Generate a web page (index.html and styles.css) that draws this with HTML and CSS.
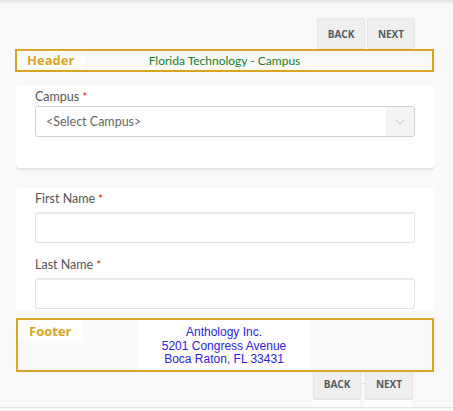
FILE: index.html
```html
<!DOCTYPE html>
<html>
<head>
<meta charset="utf-8">
<link rel="stylesheet" href="styles.css">
</head>
<body>
<div class="topbar"></div>
<div class="nav nav-top">
  <button class="btn">BACK</button>
  <button class="btn">NEXT</button>
</div>
<div class="region header">
  <span class="region-label">Header</span>
  <span class="header-title">Florida Technology - Campus</span>
</div>
<div class="card card-campus">
  <label class="field-label">Campus <span class="req">*</span></label>
  <div class="select">
    <span class="select-text">&lt;Select Campus&gt;</span>
    <span class="select-arrow">
      <svg width="10" height="6" viewBox="0 0 10 6"><path d="M1 1 L5 5 L9 1" fill="none" stroke="#d8d8d8" stroke-width="1.3"/></svg>
    </span>
  </div>
</div>
<div class="card card-name">
  <label class="field-label">First Name <span class="req">*</span></label>
  <div class="input"></div>
  <label class="field-label label-gap">Last Name <span class="req">*</span></label>
  <div class="input"></div>
</div>
<div class="region footer">
  <span class="region-label">Footer</span>
  <div class="address">
    <div>Anthology Inc.</div>
    <div>5201 Congress Avenue</div>
    <div>Boca Raton, FL 33431</div>
  </div>
</div>
<div class="nav nav-bottom">
  <button class="btn">BACK</button>
  <span class="btn-link"></span>
  <button class="btn">NEXT</button>
</div>
<div class="nav nav-ghost">
  <span class="ghost"></span>
  <span class="ghost"></span>
</div>
</body>
</html>
```
FILE: styles.css
```css
html, body {
  margin: 0;
  padding: 0;
  background: #f9f9f9;
  height: 411px;
  overflow: hidden;
  font-family: Lato, "Open Sans", sans-serif;
}
body {
  border-bottom: 1px solid #e6e6e6;
  box-sizing: border-box;
  height: 408px;
  overflow: visible;
}
.topbar {
  height: 4px;
  background: linear-gradient(#e4e4e4, #f9f9f9);
}
.nav {
  display: flex;
  justify-content: flex-end;
}
.nav-top {
  margin-top: 14px;
  margin-right: 38px;
  gap: 2px;
}
.btn {
  width: 48px;
  height: 31px;
  background: #efefef;
  border: 1px solid #e6e6e6;
  border-radius: 2px;
  font-family: "Open Sans", Lato, sans-serif;
  font-weight: 700;
  font-size: 10px;
  color: #555a60;
  padding: 0;
  margin: 0;
}
.region {
  border: 2px solid #daa520;
  display: flex;
  position: relative;
  background: #fafafa;
}
.header {
  margin: 0 19px 0 15px;
  height: 19px;
  align-items: center;
}
.region-label {
  background: #fff;
  color: #daa520;
  font-family: "Open Sans", sans-serif;
  font-weight: 700;
  font-size: 13px;
  width: 57px;
  padding-left: 10px;
  line-height: 19px;
  height: 19px;
}
.header-title {
  position: absolute;
  left: 0;
  right: 0;
  text-align: center;
  color: #16801f;
  font-size: 12px;
  line-height: 19px;
  pointer-events: none;
}
.card {
  background: #fff;
  margin: 0 19px 0 16px;
  border-radius: 3px;
  padding: 0 19px;
  display: flex;
  flex-direction: column;
}
.card-campus {
  margin-top: 13px;
  height: 83px;
  box-shadow: 0 2px 1px #e4e4e4;
  padding-top: 3px;
  box-sizing: border-box;
}
.card-name {
  margin-top: 20px;
  height: 122px;
  box-sizing: border-box;
  padding-top: 2px;
}
.field-label {
  font-size: 12.5px;
  color: #555;
  line-height: 17px;
  height: 18px;
}
.req {
  color: #e00;
  font-size: 11px;
}
.label-gap {
  margin-top: 13px;
}
.select {
  margin-top: 0;
  height: 29px;
  border: 1px solid #cfcfcf;
  border-radius: 3px;
  display: flex;
  align-items: stretch;
  overflow: hidden;
}
.select-text {
  flex: 1;
  padding-left: 10px;
  font-size: 12.5px;
  color: #666;
  line-height: 29px;
}
.select-arrow {
  width: 28px;
  background: #f4f4f4;
  display: flex;
  align-items: center;
  justify-content: center;
}
.input {
  height: 28px;
  border: 1px solid #e2e2e2;
  border-top: 2px solid #e9e9e9;
  border-radius: 3px;
  margin-top: 4px;
  background: #fff;
}
.footer {
  margin: 8px 19px 0 16px;
  height: 50px;
  align-items: flex-start;
}
.footer .region-label {
  width: 53px;
  height: 20px;
  line-height: 22px;
  padding-left: 11px;
}
.address {
  margin-left: 57px;
  width: 170px;
  height: 50px;
  background: #fff;
  text-align: center;
  font-family: "Liberation Sans", Arial, sans-serif;
  font-size: 12px;
  line-height: 13.5px;
  color: #2b22e6;
  padding-top: 6px;
  box-sizing: border-box;
}
.nav-bottom {
  margin-right: 40px;
  margin-top: -4px;
  align-items: center;
}
.btn-link {
  width: 4px;
  height: 1px;
  background: #e2e2e2;
}
.nav-bottom .btn {
  height: 31px;
  box-shadow: 0 1px 1px #e0e0e0;
}
.nav-ghost {
  margin-right: 41px;
  margin-top: 1px;
  gap: 4px;
}
.ghost {
  width: 48px;
  height: 12px;
  background: #fff;
}
```
